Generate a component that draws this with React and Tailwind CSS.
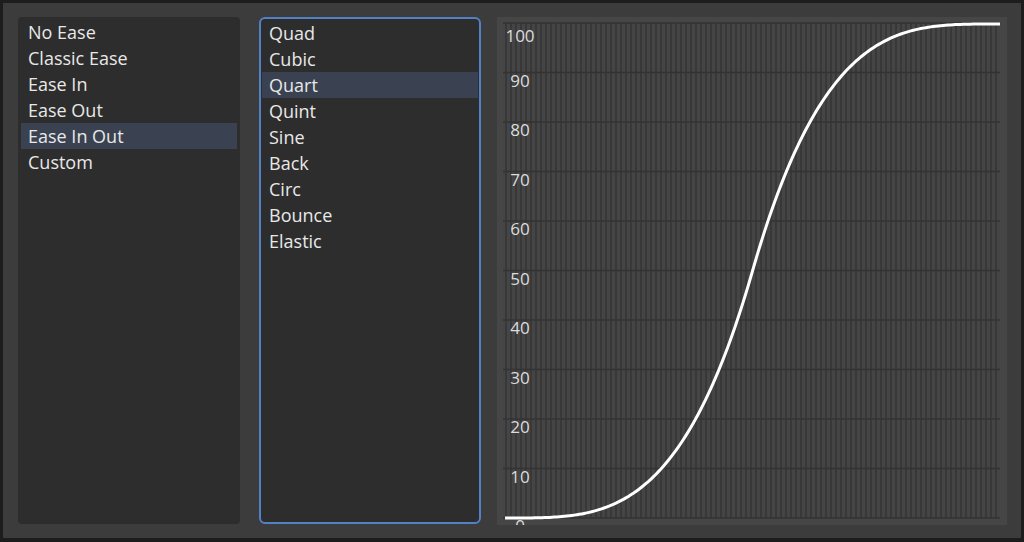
import React from 'react'

const easeTypes = ['No Ease', 'Classic Ease', 'Ease In', 'Ease Out', 'Ease In Out', 'Custom'];
const curves = ['Quad', 'Cubic', 'Quart', 'Quint', 'Sine', 'Back', 'Circ', 'Bounce', 'Elastic'];

// chart box is 510 x 508, plot area starts 6px in
const PX = 6, PY = 6, PW = 497, PH = 495;

function easeInOut(t) {
    const p = 3.5;
    const k = Math.pow(2, p - 1);
    return t < 0.5 ? k * Math.pow(t, p) : 1 - k * Math.pow(1 - t, p);
}

function ListItem({ label, selected }) {
    return (
        <div className={`h-[26px] flex items-center pl-[7px] ${selected ? 'bg-[#3a4251]' : ''}`}>
            {label}
        </div>
    );
}

function Chart() {
    const stripes = [];
    for (let x = PX + 2; x < PX + PW; x += 5) {
        stripes.push(<rect key={x} x={x} y={PY} width={2} height={PH} fill="#383838" />);
    }

    const rows = [];
    for (let i = 0; i <= 10; i++) {
        const y = PY + PH - (i * PH) / 10;
        rows.push(<line key={'l' + i} x1={PX} x2={PX + PW} y1={y} y2={y} stroke="#333333" strokeWidth={1.5} />);
    }

    const labels = [];
    for (let i = 0; i <= 10; i++) {
        const y = PY + PH - (i * PH) / 10;
        labels.push(
            <text key={'t' + i} x={23} y={i === 10 ? y + 19 : y + 14} textAnchor="middle" fontSize="17" fill="#dcdcdc"
                style={{ fontFamily: '"Open Sans", sans-serif' }}>
                {i * 10}
            </text>
        );
    }

    let d = '';
    const steps = 200;
    for (let i = 0; i <= steps; i++) {
        const t = i / steps;
        const x = PX + 2 + t * (PW - 2);
        const y = PY + PH - easeInOut(t) * (PH - 1);
        d += (i === 0 ? 'M' : 'L') + x.toFixed(2) + ' ' + y.toFixed(2) + ' ';
    }

    return (
        <svg width="510" height="508" viewBox="0 0 510 508" className="block">
            <rect x="0" y="0" width="510" height="508" fill="#464646" />
            <rect x={PX} y={PY} width={PW} height={PH} fill="#454545" />
            {stripes}
            {rows}
            {labels}
            <path d={d} fill="none" stroke="#ffffff" strokeWidth="3" strokeLinecap="butt" />
        </svg>
    );
}

export default function App() {
    return (
        <div className="w-[1024px] h-[542px] bg-[#1d1d1d] pt-[3px] pl-[3px] pr-[3px] pb-[4px]">
            <div className="h-full bg-[#3c3c3c] flex pl-[15px] pt-[14px] pr-[14px]"
                style={{ fontFamily: '"Open Sans", sans-serif' }}>
                <div className="w-[222px] h-[507px] bg-[#2d2d2d] rounded-[4px] pt-[2px] px-[3px] text-[18px] text-[#e8e8e8]">
                    {easeTypes.map((e) => (
                        <ListItem key={e} label={e} selected={e === 'Ease In Out'} />
                    ))}
                </div>
                <div className="ml-[19px] w-[222px] h-[507px] bg-[#2d2d2d] rounded-[6px] border-2 border-[#5281c6] pt-[1px] px-[1px] text-[18px] text-[#e8e8e8]">
                    {curves.map((c) => (
                        <ListItem key={c} label={c} selected={c === 'Quart'} />
                    ))}
                </div>
                <div className="ml-[16px]">
                    <Chart />
                </div>
            </div>
        </div>
    );
}
